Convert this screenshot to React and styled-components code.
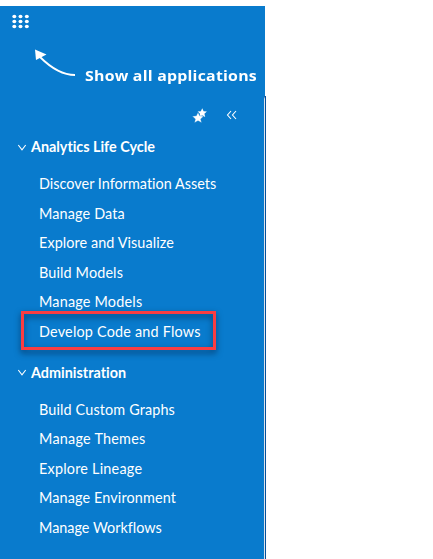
import React from "react";
import styled, { createGlobalStyle } from "styled-components";

const GlobalStyle = createGlobalStyle`
  * { box-sizing: border-box; }
  body { margin: 0; background: #fff; }
`;

const Page = styled.div`
  display: flex;
  height: 559px;
  padding-top: 6px;
  overflow: hidden;
  font-family: Lato, "Open Sans", sans-serif;
  font-variant-ligatures: none;
  color: #fff;
`;

const Sidebar = styled.nav`
  width: 265px;
  background: #097bcd;
`;

const Edge = styled.div`
  width: 2px;
  margin: 90px 0 0 -1px;
  border-top: 3px solid #07519a;
  border-left: 1px solid #dfe3ea;
  border-right: 1px solid #07519a;
`;

const TopBar = styled.header`
  display: flex;
  height: 36px;
  padding: 8px 0 0 12px;
`;

const Callout = styled.div`
  display: flex;
  height: 54px;
  padding-left: 32px;
`;

const CalloutText = styled.span`
  margin: 24px 0 0 7px;
  font: 700 13.5px/20px "Open Sans", sans-serif;
  letter-spacing: 0.2px;
  white-space: nowrap;
  transform: scaleX(1.175);
  transform-origin: left;
  height: 20px;
`;

const Tools = styled.div`
  display: flex;
  align-items: flex-start;
  height: 36px;
  padding: 11px 0 0 191px;
  gap: 16px;
`;

const Section = styled.section`
  height: ${(p) => p.$height}px;
`;

const Heading = styled.h2`
  display: flex;
  align-items: center;
  gap: 4px;
  margin: 0 0 8px;
  padding-left: 17px;
  height: 29px;
  font-size: 14.4px;
  font-weight: 700;
  letter-spacing: ${(p) => p.$track}px;
  white-space: nowrap;
`;

const List = styled.ul`
  margin: 0;
  padding: 0;
  list-style: none;
`;

const Item = styled.li`
  display: flex;
  align-items: center;
  position: relative;
  height: 29.5px;
  padding-left: 39px;
  font-size: 14.4px;
  letter-spacing: ${(p) => p.$track}px;
  white-space: nowrap;
`;

const Highlight = styled.span`
  position: absolute;
  left: 21px;
  top: -6px;
  width: 195px;
  height: 39px;
  border: 3px solid #fb3d41;
  filter: drop-shadow(0 3px 3px rgba(0, 20, 50, 0.65));
`;

const sections = [
  {
    title: "Analytics Life Cycle",
    track: -0.03,
    height: 225.6,
    items: [
      ["Discover Information Assets", 0.02],
      ["Manage Data", 0.15],
      ["Explore and Visualize", 0.08],
      ["Build Models", 0.14],
      ["Manage Models", 0.2],
      ["Develop Code and Flows", 0.2, true],
    ],
  },
  {
    title: "Administration",
    track: 0,
    height: 190,
    items: [
      ["Build Custom Graphs", 0.14],
      ["Manage Themes", 0.24],
      ["Explore Lineage", 0.22],
      ["Manage Environment", 0.13],
      ["Manage Workflows", 0],
    ],
  },
];

const GridIcon = () => (
  <svg width="18" height="15" fill="#fff">
    {[2.5, 7.5, 12.5].map((y) =>
      [2.3, 8.5, 14.8].map((x) => (
        <ellipse key={`${x}-${y}`} cx={x} cy={y} rx="2" ry="1.7" />
      ))
    )}
  </svg>
);

const ArrowIcon = () => (
  <svg width="46" height="38" fill="none">
    <path d="M8 15C19 26 30 33 43 33" stroke="#fff" strokeWidth="1.8" />
    <path d="M3 7.5L14.5 12.5L4 18Z" fill="#fff" />
  </svg>
);

const StarsIcon = () => (
  <svg width="17" height="17" fill="#fff">
    <path d="M11.2 1.2l1.4 3 3.3.3-2.5 2.3.8 3.3-3-1.7-2.9 1.7.7-3.3-2.4-2.3 3.3-.3z" />
    <path
      d="M7 5.2l1.7 3.6 4 .4-3 2.7.9 3.9-3.6-2-3.5 2 .8-3.9-3-2.7 4-.4z"
      stroke="#097bcd"
      strokeWidth=".4"
    />
  </svg>
);

const CollapseIcon = () => (
  <svg width="14" height="16" fill="none" stroke="#fff" strokeWidth="1.1">
    <path d="M7 4L3.5 8L7 12M12 4L8.5 8L12 12" />
  </svg>
);

const Chevron = () => (
  <svg width="10" height="10" fill="none" stroke="#fff" strokeWidth="1.1">
    <path d="M1.3 3L5 7.8L8.7 3" />
  </svg>
);

export default function App() {
  return (
    <Page>
      <GlobalStyle />
      <Sidebar>
        <TopBar>
          <GridIcon />
        </TopBar>
        <Callout>
          <ArrowIcon />
          <CalloutText>Show all applications</CalloutText>
        </Callout>
        <Tools>
          <StarsIcon />
          <CollapseIcon />
        </Tools>
        {sections.map((s) => (
          <Section key={s.title} $height={s.height}>
            <Heading $track={s.track}>
              <Chevron />
              {s.title}
            </Heading>
            <List>
              {s.items.map(([label, track, marked]) => (
                <Item key={label} $track={track}>
                  {marked && <Highlight />}
                  {label}
                </Item>
              ))}
            </List>
          </Section>
        ))}
      </Sidebar>
      <Edge />
    </Page>
  );
}
